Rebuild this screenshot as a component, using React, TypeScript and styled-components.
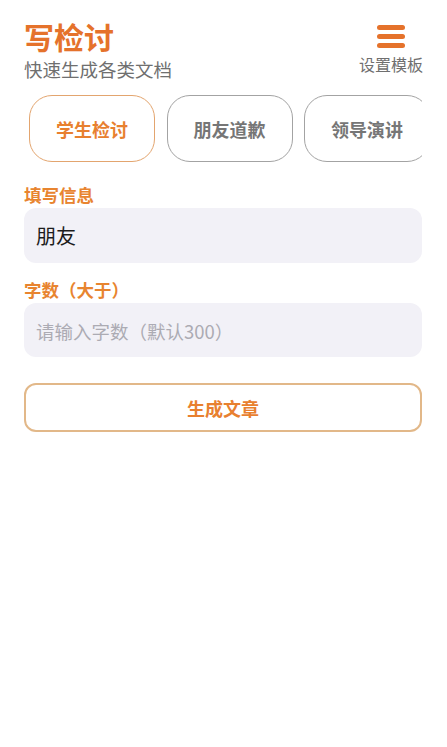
import React from "react";
import styled, { createGlobalStyle } from "styled-components";

const Global = createGlobalStyle`
  html, body { margin: 0; padding: 0; background: #ffffff; }
  body { font-family: "Noto Sans CJK SC", "Noto Sans", sans-serif; }
  * { box-sizing: border-box; }
`;

const Page = styled.div`
  width: 447px;
  min-height: 747px;
  padding: 20px 25px 0 24px;
  background: #ffffff;
`;

const Header = styled.header`
  display: flex;
  justify-content: space-between;
  align-items: flex-start;
`;

const TitleBlock = styled.div`
  display: flex;
  flex-direction: column;
`;

const Title = styled.h1`
  margin: 0;
  font-size: 30px;
  line-height: 32px;
  font-weight: 700;
  color: #e5722b;
`;

const Subtitle = styled.div`
  margin-top: 6px;
  font-size: 18.5px;
  line-height: 22px;
  color: #6f6f6f;
`;

const MenuButton = styled.div`
  display: flex;
  flex-direction: column;
  align-items: center;
  padding-top: 5px;
  margin-right: -1px;
`;

const Bars = styled.div`
  display: flex;
  flex-direction: column;
  gap: 4px;
`;

const Bar = styled.span`
  display: block;
  width: 28px;
  height: 5px;
  border-radius: 3px;
  background: #e5722b;
`;

const MenuLabel = styled.div`
  margin-top: 6px;
  font-size: 16px;
  line-height: 20px;
  color: #6f6f6f;
`;

const Tabs = styled.div`
  margin-top: 15px;
  display: flex;
  gap: 11.5px;
  padding-left: 5px;
  overflow: hidden;
`;

const Tab = styled.div<{ $active?: boolean }>`
  flex: 0 0 auto;
  height: 67px;
  padding: 0 26px;
  display: flex;
  align-items: center;
  justify-content: center;
  border-radius: 23px;
  border: 1.5px solid ${(p) => (p.$active ? "#e3a56f" : "#a3a3a3")};
  color: ${(p) => (p.$active ? "#e8802f" : "#767676")};
  font-size: 18px;
  font-weight: 700;
  white-space: nowrap;
`;

const Field = styled.div`
  display: flex;
  flex-direction: column;
  gap: 2px;
  margin-top: ${(p: { $top: number }) => p.$top}px;
`;

const Label = styled.label`
  font-size: 17.5px;
  line-height: 22px;
  font-weight: 700;
  color: #e8842f;
`;

const Input = styled.input<{ $h: number }>`
  height: ${(p) => p.$h}px;
  width: 100%;
  border: none;
  outline: none;
  border-radius: 12px;
  background: #f2f1f7;
  padding: 0 12px;
  font-family: "Noto Sans CJK SC", "Noto Sans", sans-serif;
  font-size: 20px;
  color: #1c1c1c;
  &::placeholder {
    color: #acabb3;
    font-size: 18.5px;
  }
`;

const GenerateButton = styled.button`
  margin-top: 26px;
  width: 100%;
  height: 49px;
  border: 2px solid #e2b889;
  border-radius: 12px;
  background: #ffffff;
  color: #e8802f;
  font-family: "Noto Sans CJK SC", "Noto Sans", sans-serif;
  font-size: 18px;
  font-weight: 700;
`;

export default function App() {
  return (
    <>
      <Global />
      <Page>
        <Header>
          <TitleBlock>
            <Title>写检讨</Title>
            <Subtitle>快速生成各类文档</Subtitle>
          </TitleBlock>
          <MenuButton>
            <Bars>
              <Bar />
              <Bar />
              <Bar />
            </Bars>
            <MenuLabel>设置模板</MenuLabel>
          </MenuButton>
        </Header>
        <Tabs>
          <Tab $active>学生检讨</Tab>
          <Tab>朋友道歉</Tab>
          <Tab>领导演讲</Tab>
        </Tabs>
        <Field $top={22}>
          <Label>填写信息</Label>
          <Input $h={55} defaultValue="朋友" />
        </Field>
        <Field $top={16}>
          <Label>字数（大于）</Label>
          <Input $h={54} placeholder="请输入字数（默认300）" />
        </Field>
        <GenerateButton>生成文章</GenerateButton>
      </Page>
    </>
  );
}
